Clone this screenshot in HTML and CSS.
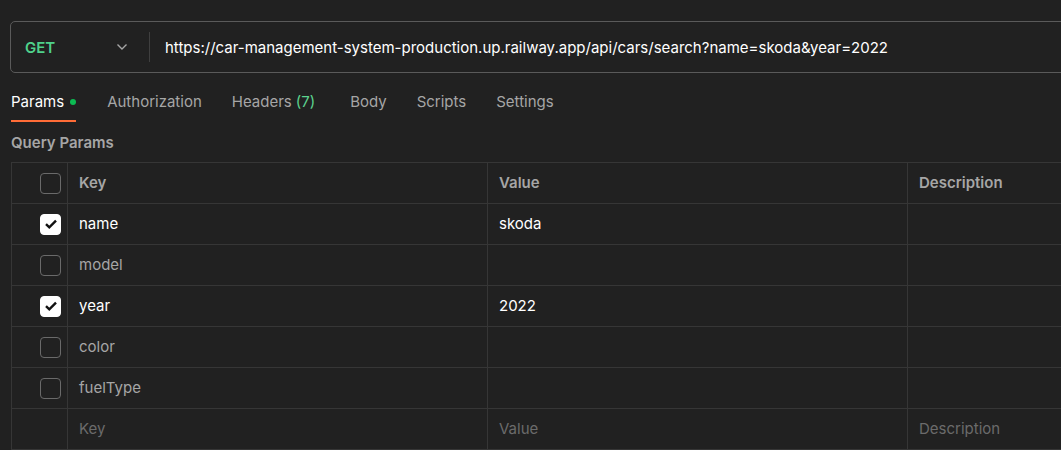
FILE: index.html
```html
<!DOCTYPE html>
<html lang="en">
<head>
<meta charset="utf-8">
<title>Request</title>
<link rel="stylesheet" href="styles.css">
</head>
<body>
<div class="app">
  <div class="urlbar">
    <div class="method">
      <span class="method-name">GET</span>
      <svg class="chevron" width="12" height="8" viewBox="0 0 12 8"><path d="M1.5 1.5 L6 6 L10.5 1.5" fill="none" stroke="#a6a6a6" stroke-width="1.4"/></svg>
    </div>
    <div class="divider"></div>
    <div class="url">https://car-management-system-production.up.railway.app/api/cars/search?name=skoda&amp;year=2022</div>
  </div>

  <nav class="tabs">
    <div class="tab active">Params <span class="dot"></span></div>
    <div class="tab">Authorization</div>
    <div class="tab tab-headers">Headers <span class="count">(7)</span></div>
    <div class="tab">Body</div>
    <div class="tab">Scripts</div>
    <div class="tab">Settings</div>
  </nav>

  <div class="section-title">Query Params</div>

  <div class="table">
    <div class="cell check"><span class="box"></span></div>
    <div class="cell head">Key</div>
    <div class="cell head">Value</div>
    <div class="cell head">Description</div>

    <div class="cell check"><span class="box checked"><svg width="14" height="12" viewBox="0 0 14 12"><path d="M2 6.2 L5.3 9.4 L12 2.6" fill="none" stroke="#111" stroke-width="2.4"/></svg></span></div>
    <div class="cell on">name</div>
    <div class="cell on">skoda</div>
    <div class="cell"></div>

    <div class="cell check"><span class="box"></span></div>
    <div class="cell off">model</div>
    <div class="cell"></div>
    <div class="cell"></div>

    <div class="cell check"><span class="box checked"><svg width="14" height="12" viewBox="0 0 14 12"><path d="M2 6.2 L5.3 9.4 L12 2.6" fill="none" stroke="#111" stroke-width="2.4"/></svg></span></div>
    <div class="cell on">year</div>
    <div class="cell on">2022</div>
    <div class="cell"></div>

    <div class="cell check"><span class="box"></span></div>
    <div class="cell off">color</div>
    <div class="cell"></div>
    <div class="cell"></div>

    <div class="cell check"><span class="box"></span></div>
    <div class="cell off">fuelType</div>
    <div class="cell"></div>
    <div class="cell"></div>

    <div class="cell check"></div>
    <div class="cell placeholder">Key</div>
    <div class="cell placeholder">Value</div>
    <div class="cell placeholder">Description</div>
  </div>
</div>
</body>
</html>
```
FILE: styles.css
```css
html, body {
  margin: 0;
  padding: 0;
  background: #212121;
  overflow: hidden;
}
body {
  font-family: Inter, "Noto Sans", sans-serif;
  font-size: 15px;
  color: #a6a6a6;
}
.app {
  padding-top: 21px;
  width: 1100px;
}
.urlbar {
  margin-left: 10px;
  height: 52px;
  box-sizing: border-box;
  border: 1px solid #5a5a5a;
  border-radius: 5px;
  display: flex;
  align-items: center;
}
.method {
  width: 138px;
  box-sizing: border-box;
  padding-left: 14px;
  display: flex;
  align-items: center;
}
.method-name {
  color: #4fd18b;
  font-weight: 600;
  font-size: 15px;
  width: 91px;
}
.chevron {
  display: block;
}
.divider {
  width: 1px;
  height: 30px;
  background: #3f3f3f;
}
.url {
  padding-left: 15px;
  color: #ffffff;
  white-space: nowrap;
}
.tabs {
  display: flex;
  margin-top: 10px;
  margin-left: 11px;
  gap: 30px;
}
.tab {
  padding-top: 8px;
  padding-bottom: 7px;
  line-height: 22px;
  border-bottom: 2px solid transparent;
  color: #a6a6a6;
  display: flex;
  align-items: center;
  white-space: nowrap;
}
.tab.active {
  color: #ffffff;
  border-bottom-color: #ff6c37;
  margin-right: 1px;
}
.dot {
  display: inline-block;
  width: 6px;
  height: 6px;
  border-radius: 50%;
  background: #0cbb52;
  margin-left: 6px;
}
.count {
  color: #5cd38e;
  margin-left: 4px;
}
.tab-headers {
  margin-right: 5px;
}
.section-title {
  margin-top: 11px;
  margin-left: 11px;
  line-height: 20px;
  font-weight: 600;
  color: #a6a6a6;
}
.table {
  margin-top: 9px;
  margin-left: 11px;
  display: grid;
  grid-template-columns: 56px 420px 420px 1fr;
  border-top: 1px solid #363636;
  border-left: 1px solid #363636;
}
.cell {
  height: 41px;
  box-sizing: border-box;
  border-right: 1px solid #363636;
  border-bottom: 1px solid #363636;
  display: flex;
  align-items: center;
  padding-left: 11px;
  padding-bottom: 1px;
  white-space: nowrap;
}
.cell.check {
  padding-left: 28px;
  padding-bottom: 0;
}
.box {
  width: 21px;
  height: 21px;
  box-sizing: border-box;
  border: 1px solid #6a6a6a;
  border-radius: 4px;
  display: flex;
  align-items: center;
  justify-content: center;
}
.box.checked {
  background: #ffffff;
  border-color: #ffffff;
}
.box svg {
  display: block;
}
.head {
  font-weight: 600;
  color: #a6a6a6;
}
.on {
  color: #ffffff;
}
.off {
  color: #a6a6a6;
}
.placeholder {
  color: #6b6b6b;
}
```
